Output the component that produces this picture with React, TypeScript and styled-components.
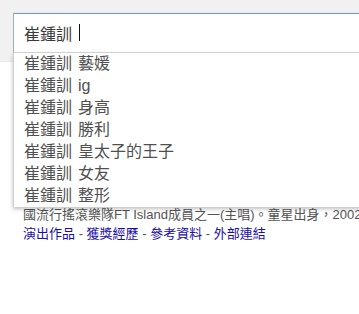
import React from "react";
import styled, { createGlobalStyle } from "styled-components";

const GlobalStyle = createGlobalStyle`
  html, body {
    margin: 0;
    padding: 0;
    background: #fff;
    overflow: hidden;
  }
  body {
    font-family: "Liberation Sans", "Noto Sans CJK TC", sans-serif;
  }
`;

const Page = styled.div`
  width: 359px;
  height: 314px;
  position: relative;
  overflow: hidden;
`;

const Header = styled.div`
  height: 62px;
  box-sizing: border-box;
  padding: 13px 0 0 13px;
  background: #f1f1f1;
  border-bottom: 1px solid #ebebeb;
`;

const SearchBox = styled.div`
  position: relative;
  width: 380px;
`;

const Input = styled.div`
  height: 40px;
  box-sizing: border-box;
  display: flex;
  align-items: center;
  padding: 0 0 1px 10px;
  background: #fff;
  border-top: 1px solid #6f99b3;
  border-left: 1px solid #9ab0bf;
  border-bottom: 1px solid #d6d6d6;
  box-shadow: 0 -2px 0 #e9ebf6;
  font-size: 16px;
  color: #3a3a3a;
  word-spacing: 1.5px;
  white-space: pre;
`;

const Caret = styled.span`
  display: inline-block;
  width: 1px;
  height: 17px;
  margin-left: 1px;
  background: #111;
`;

const Dropdown = styled.ul`
  position: absolute;
  top: 40px;
  left: 0;
  right: 0;
  margin: 0;
  padding: 0;
  list-style: none;
  background: #fff;
  border-left: 1px solid #cfcfcf;
  box-shadow: 0 2px 4px rgba(0, 0, 0, 0.25);
  z-index: 2;
`;

const Suggestion = styled.li`
  padding-left: 10px;
  font-size: 16px;
  line-height: 22px;
  color: #505050;
  word-spacing: 1.5px;
  white-space: nowrap;
`;

const Content = styled.div`
  padding: 143px 0 0 23px;
  font-size: 13px;
  line-height: 19px;
  color: #545454;
`;

const Line = styled.div`
  white-space: nowrap;
`;

const Link = styled.a`
  color: #1a0dab;
  text-decoration: none;
`;

const suggestions = ["藝媛", "ig", "身高", "勝利", "皇太子的王子", "女友", "整形"];
const links = ["演出作品", "獲獎經歷", "參考資料", "外部連結"];

const App: React.FC = () => {
  return (
    <Page>
      <GlobalStyle />
      <Header>
        <SearchBox>
          <Input>
            崔鍾訓 <Caret />
          </Input>
          <Dropdown>
            {suggestions.map((s) => (
              <Suggestion key={s}>崔鍾訓 {s}</Suggestion>
            ))}
          </Dropdown>
        </SearchBox>
      </Header>
      <Content>
        <Line>國流行搖滾樂隊FT Island成員之一(主唱)。童星出身，2002</Line>
        <Line>
          {links.map((l, i) => (
            <React.Fragment key={l}>
              {i > 0 && " - "}
              <Link href="#">{l}</Link>
            </React.Fragment>
          ))}
        </Line>
      </Content>
    </Page>
  );
};

export default App;
